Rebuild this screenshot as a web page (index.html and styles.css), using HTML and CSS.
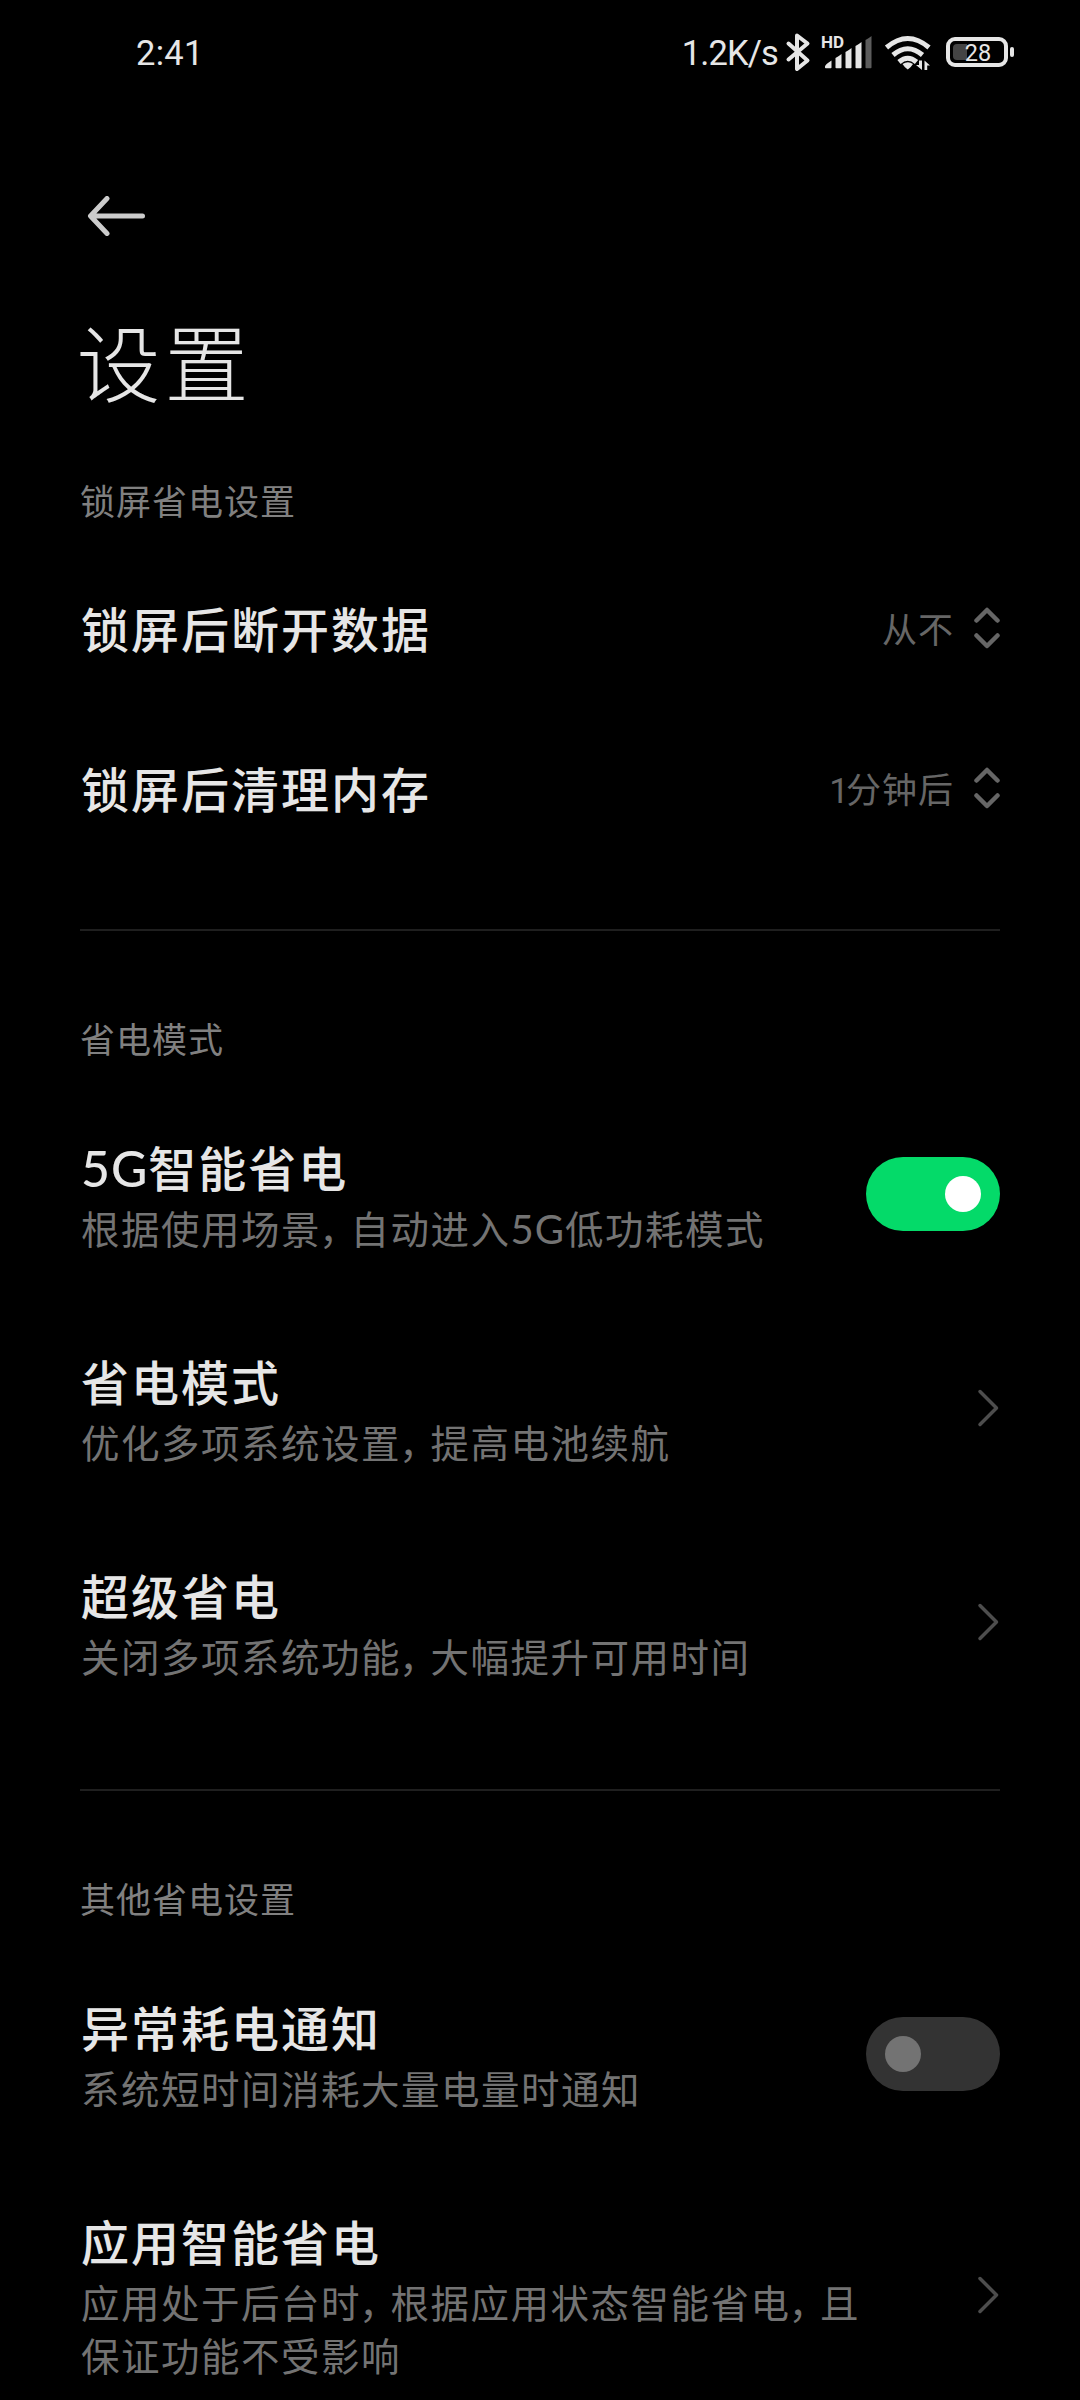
FILE: index.html
```html
<!DOCTYPE html>
<html lang="zh-CN">
<head>
<meta charset="utf-8">
<title>设置</title>
<link rel="stylesheet" href="styles.css">
</head>
<body>
<div class="status">
  <span class="clock">2:41</span>
  <span class="speed">1.2K/s</span>
  <svg class="status-icons" width="240" height="56" viewBox="780 25 240 56">
    <path d="M788.500 43.500 807.500 60.500 797 69V35.500L807.500 43.500 788.500 59.500" fill="none" stroke="#e6e6e6" stroke-width="4" stroke-linejoin="round" stroke-linecap="round"/>
    <text class="hd" x="821" y="48">HD</text>
    <g fill="#e6e6e6">
      <path d="M825 66.500q0-2 6.500-6v7q0 .8-.8.8h-4.900q-.8 0-.8-.8zM835.500 58q3-1.500 6-4v13.500q0 .8-.8.8h-4.400q-.8 0-.8-.8zM845.500 52q3-1.500 6-4v19.500q0 .8-.8.8h-4.400q-.8 0-.8-.8zM855.500 46q3-1.500 6-4v25.500q0 .8-.8.8h-4.400q-.8 0-.8-.8z"/>
      <path fill="#5c5c5c" d="M865.500 40q3-1.500 6-4v31.500q0 .8-.8.8h-4.400q-.8 0-.8-.8z"/>
      <path d="M902.500 64q5.500-3.500 10.500 0-2 3.500-5.250 5.500Q904.500 67.500 902.500 64z"/>
      <path d="M919 60.500h3v9.500l-6-5h3zM924.500 70v-9.500l5.500 5h-2.800V70z"/>
    </g>
    <g fill="none" stroke="#e6e6e6" stroke-width="5">
      <path d="M886.500 47.500q21.250-18 42.500 0M893 55q14.750-12.500 29.500 0M899 62q8.750-7.500 17.500 0"/>
    </g>
    <rect x="948" y="39" width="58" height="26" rx="7" fill="none" stroke="#e6e6e6" stroke-width="4"/>
    <path d="M957 44h10v16h-10q-4 0-4-4v-8q0-4 4-4z" fill="#444"/>
    <path d="M1012 49v6" stroke="#e6e6e6" stroke-width="4" stroke-linecap="round"/>
    <text class="level" x="978" y="60.500" text-anchor="middle">28</text>
  </svg>
</div>
<header class="header">
  <svg width="60" height="40" viewBox="0 0 60 40"><path d="M55.500 20H4M20 2.500 3.500 20 20 37.500" fill="none" stroke="#ccc" stroke-width="5" stroke-linecap="round" stroke-linejoin="round"/></svg>
  <h1 class="title">设置</h1>
</header>
<main>
  <section class="group">
    <h2 class="label">锁屏省电设置</h2>
    <div class="row short">
      <div class="name">锁屏后断开数据</div>
      <div class="value">从不</div>
      <svg class="picker" width="26" height="42" viewBox="0 0 26 42"><path d="M2.500 13.500 13 3 23.500 13.500M2.500 28.500 13 39 23.500 28.500"/></svg>
    </div>
    <div class="row short">
      <div class="name">锁屏后清理内存</div>
      <div class="value"><span class="digit">1</span>分钟后</div>
      <svg class="picker" width="26" height="42" viewBox="0 0 26 42"><path d="M2.500 13.500 13 3 23.500 13.500M2.500 28.500 13 39 23.500 28.500"/></svg>
    </div>
  </section>
  <section class="group">
    <h2 class="label">省电模式</h2>
    <div class="row">
      <div class="text"><div class="name"><span class="latin">5G</span>智能省电</div><div class="desc">根据使用场景<span class="comma">&#xFF0C;</span>自动进入<span class="latin">5G</span>低功耗模式</div></div>
      <div class="switch on"></div>
    </div>
    <div class="row">
      <div class="text"><div class="name">省电模式</div><div class="desc">优化多项系统设置<span class="comma">&#xFF0C;</span>提高电池续航</div></div>
      <svg class="chevron" width="24" height="40" viewBox="0 0 24 40"><path d="M4 3.500 20.500 20 4 36.500"/></svg>
    </div>
    <div class="row">
      <div class="text"><div class="name">超级省电</div><div class="desc">关闭多项系统功能<span class="comma">&#xFF0C;</span>大幅提升可用时间</div></div>
      <svg class="chevron" width="24" height="40" viewBox="0 0 24 40"><path d="M4 3.500 20.500 20 4 36.500"/></svg>
    </div>
  </section>
  <section class="group">
    <h2 class="label">其他省电设置</h2>
    <div class="row">
      <div class="text"><div class="name">异常耗电通知</div><div class="desc">系统短时间消耗大量电量时通知</div></div>
      <div class="switch"></div>
    </div>
    <div class="row">
      <div class="text"><div class="name">应用智能省电</div><div class="desc">应用处于后台时<span class="comma">&#xFF0C;</span>根据应用状态智能省电<span class="comma">&#xFF0C;</span>且<br>保证功能不受影响</div></div>
      <svg class="chevron" width="24" height="40" viewBox="0 0 24 40"><path d="M4 3.500 20.500 20 4 36.500"/></svg>
    </div>
  </section>
</main>
</body>
</html>
```
FILE: styles.css
```css
* { box-sizing: border-box; }
body {
  margin: 0;
  height: 2400px;
  overflow: hidden;
  background: #000;
  color: #e6e6e6;
  font-family: Lato, "Noto Sans CJK SC", sans-serif;
}
svg { display: block; flex: none; }
.status {
  display: flex;
  height: 106px;
  padding: 25px 60px 0 136px;
  font-family: Roboto, sans-serif;
  font-size: 34.500px;
  line-height: 56px;
  font-weight: 400;
}
.clock { letter-spacing: .3px; }
.speed { margin-left: auto; margin-right: 2px; letter-spacing: -.9px; }
.hd { font-family: Roboto, sans-serif; font-size: 17px; font-weight: 700; fill: #e6e6e6; }
.level { font-size: 23.500px; font-weight: 400; fill: #e6e6e6; }
.header { height: 371px; padding: 90px 80px 0 87px; }
.title {
  margin: 78px 0 0 -10.500px;
  font-size: 84px;
  line-height: 100px;
  font-weight: 300;
  letter-spacing: 4px;
}
.group { padding: 0 80px 59px; }
.group + .group::before {
  content: "";
  display: block;
  height: 2px;
  margin-bottom: 84px;
  background: #1f1f1f;
}
.label {
  margin: 0;
  height: 73px;
  font-size: 35px;
  line-height: 48px;
  letter-spacing: 1px;
  font-weight: 400;
  color: #808080;
}
.row {
  display: flex;
  align-items: center;
  justify-content: space-between;
  padding: 46.500px 0 46.500px 1px;
}
.short { height: 160px; padding: 0 0 0 1px; }
.name { font-size: 48px; line-height: 68px; letter-spacing: 2px; font-weight: 500; }
.desc { font-size: 38.500px; line-height: 53px; letter-spacing: 1.500px; color: #737373; white-space: nowrap; }
.latin { font-size: 1.040em; line-height: 1; letter-spacing: 1px; }
.comma { display: inline-block; width: 29.500px; text-indent: -2px; line-height: 1; font-feature-settings: "halt"; letter-spacing: 0; }
.value { margin: -3px 20px 0 auto; font-size: 35px; line-height: 48px; letter-spacing: 1px; color: #666; }
.digit { margin-right: -3px; font-family: Roboto, sans-serif; font-size: 35px; line-height: 1; letter-spacing: 0; }
.picker { margin-top: -4px; }
.picker path, .chevron path { fill: none; stroke: #666; stroke-width: 4.500; stroke-linecap: round; stroke-linejoin: round; }
.chevron { margin-top: -2px; }
.chevron path { stroke: #4d4d4d; stroke-width: 3.500; }
.switch {
  width: 134px;
  height: 74px;
  margin-top: -2px;
  padding: 19px;
  border-radius: 37px;
  background: #333;
}
.switch::before { content: ""; display: block; width: 36px; height: 36px; border-radius: 50%; background: #737373; }
.switch.on { background: #04da69; }
.switch.on::before { margin-left: auto; background: #fff; }
```
